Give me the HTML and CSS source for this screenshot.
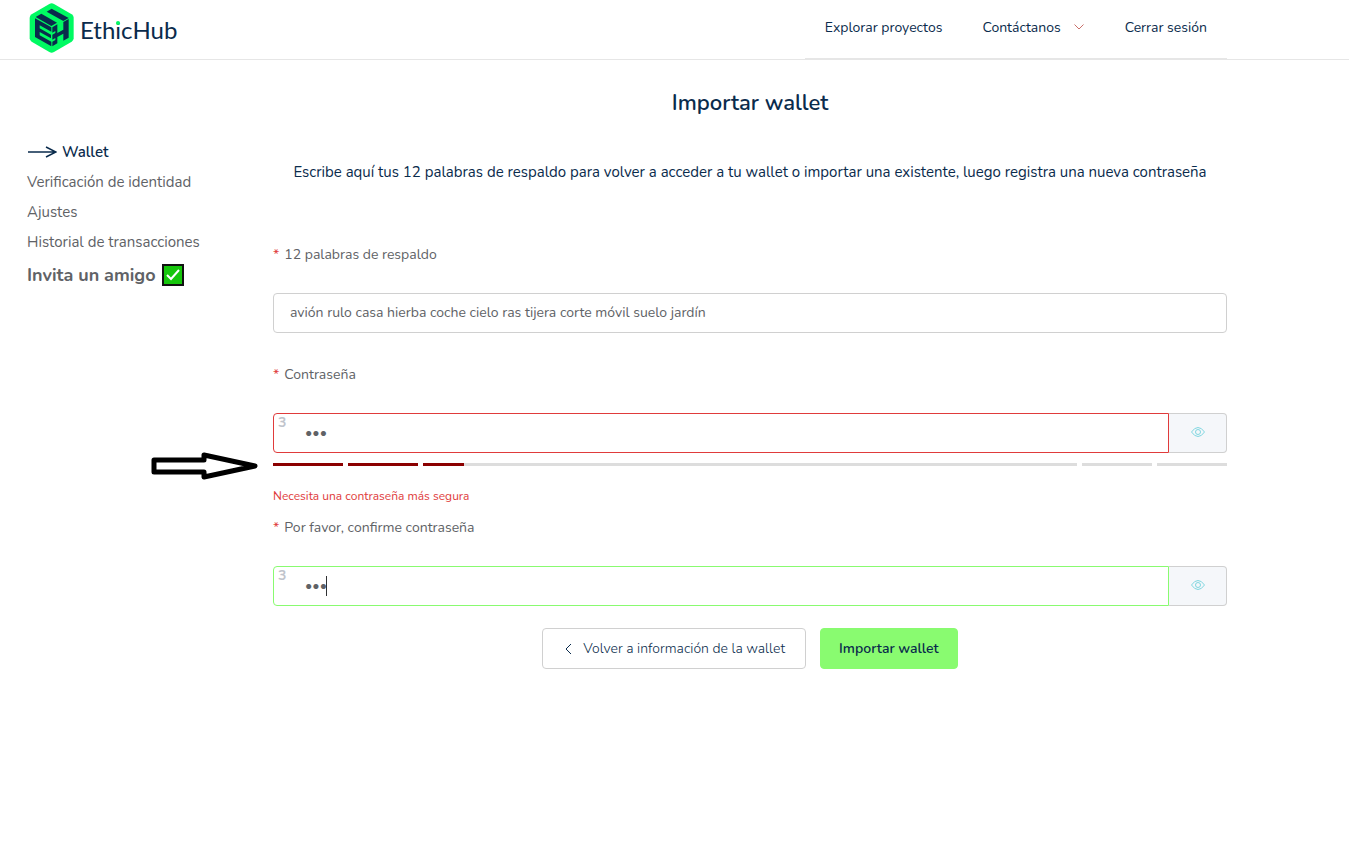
FILE: index.html
```html
<!DOCTYPE html>
<html lang="es">
<head>
  <meta charset="UTF-8" />
  <meta name="viewport" content="width=device-width, initial-scale=1.0"/>
  <title>EthicHub - Importar wallet</title>
  <link rel="stylesheet" href="styles.css">
</head>
<body>
  <header class="header">
    <a href="#" class="logo">
      <svg class="logo-mark" viewBox="0 0 135 150" aria-hidden="true">
        <path d="M61 3q7-4 14 0l53 31q6 4 6 10v62q0 6-6 10l-53 31q-7 4-14 0L8 116q-6-4-6-10V44q0-6 6-10z" fill="#00fa62"/>
        <g fill="#0a2b4c">
          <path d="M20 42l17-10 47 27-17 10z"/>
          <path d="M53 26l15-9 51 28-16 9z"/>
          <path d="M18 46l49 27v13L32 67v9l34 19v11L32 87v10l35 19v14L18 102z"/>
          <path d="M70 73l15-9v26l18-10V57l16-9v56l-16 9V92l-18 10v19l-15 9v-14l9-5v-6l-9 5V95l9-5v-6l-9 5z"/>
        </g>
      </svg>
      <span class="logo-text">Eth<span class="logo-i">i</span>cHub</span>
    </a>
    <nav class="nav">
      <a href="#">Explorar proyectos</a>
      <a href="#">Contáctanos
        <svg class="chevron" viewBox="0 0 12 12" aria-hidden="true"><path d="M1.500 3.500L6 8l4.500-4.500" fill="none" stroke="#c9706a"/></svg>
      </a>
      <a href="#">Cerrar sesión</a>
    </nav>
  </header>

  <div class="layout">
    <aside class="sidebar">
      <a href="#" class="active">
        <svg class="arrow" viewBox="0 0 30 12" aria-hidden="true"><path d="M1 6h28M19 1l10 5-10 5" fill="none" stroke="#0a2b4c" stroke-width="1.5"/></svg>
        Wallet
      </a>
      <a href="#">Verificación de identidad</a>
      <a href="#">Ajustes</a>
      <a href="#">Historial de transacciones</a>
      <a href="#" class="invite">Invita un amigo
        <svg class="check" viewBox="0 0 22 22" aria-hidden="true"><rect x="1" y="1" width="20" height="20" fill="#16c60c" stroke="#111" stroke-width="2"/><path d="M5 11l4 4 8-9" fill="none" stroke="#fff" stroke-width="2"/></svg>
      </a>
    </aside>

    <main class="content">
      <h1>Importar wallet</h1>
      <p class="intro">Escribe aquí tus 12 palabras de respaldo para volver a acceder a tu wallet o importar una existente, luego registra una nueva contraseña</p>

      <form>
        <div class="item">
          <label for="palabras">12 palabras de respaldo</label>
          <input type="text" id="palabras" value="avión rulo casa hierba coche cielo ras tijera corte móvil suelo jardín" />
        </div>

        <div class="item password">
          <label for="clave">Contraseña</label>
          <div class="group error">
            <span class="count">3</span>
            <input type="password" id="clave" value="abc" />
            <button type="button" class="toggle" aria-label="Mostrar contraseña">
              <svg viewBox="0 0 14 10" aria-hidden="true"><path d="M.5 5Q3.500 .5 7 .5T13.500 5Q10.500 9.500 7 9.500T.5 5z"/><circle cx="7" cy="5" r="2.500"/></svg>
            </button>
          </div>
          <div class="meter"><div class="meter-fill" style="width:20%"></div></div>
          <svg class="pointer" viewBox="0 0 107 28" aria-hidden="true"><path d="M3 8h50V3l51 11-51 11v-5H3z" fill="#fff" stroke="#000" stroke-width="5" stroke-linejoin="round"/></svg>
          <p class="message">Necesita una contraseña más segura</p>
        </div>

        <div class="item">
          <label for="confirmar">Por favor, confirme contraseña</label>
          <div class="group success">
            <span class="count">3</span>
            <input type="password" id="confirmar" value="abc" />
            <span class="caret"></span>
            <button type="button" class="toggle" aria-label="Mostrar contraseña">
              <svg viewBox="0 0 14 10" aria-hidden="true"><path d="M.5 5Q3.500 .5 7 .5T13.500 5Q10.500 9.500 7 9.500T.5 5z"/><circle cx="7" cy="5" r="2.500"/></svg>
            </button>
          </div>
        </div>

        <div class="buttons">
          <button type="button" class="btn">
            <svg class="back" viewBox="0 0 12 12" aria-hidden="true"><path d="M8 1L3 6l5 5" fill="none" stroke="#0a2b4c"/></svg>
            Volver a información de la wallet
          </button>
          <button type="submit" class="btn primary">Importar wallet</button>
        </div>
      </form>
    </main>
  </div>
</body>
</html>
```
FILE: styles.css
```css
* { box-sizing:border-box;}
body { margin:0; font-family: Nunito, Lato, sans-serif; font-size:14px; color:#606266; background:#fff;}
a { color:inherit; text-decoration:none;}
input, button { font-family:inherit; font-size:14px;}
svg { flex:none;}

.header { display:flex; justify-content:space-between; height:60px; padding:0 122px 0 27px; border-bottom:1px solid #e6e6e6; color:#0a2b4c;}
.logo { display:flex; align-items:center; gap:6px; padding:0 0 3px 2px;}
.logo-mark { width:45px; height:50px;}
.logo-text { font-family: Lato, sans-serif; font-size:24px; line-height:30px; padding-top:3px;}
.logo-i { position:relative;}
.logo-i::after { content:""; position:absolute; top:6px; left:1px; width:4px; height:4px; border-radius:50%; background:#00fa62;}
.nav { display:flex; border-bottom:1px solid #e6e6e6; padding-bottom:4px;}
.nav a { display:flex; align-items:center; gap:12px; padding:0 20px;}
.chevron { width:12px; height:12px;}

.layout { display:flex; padding:0 122px 0 27px;}
.sidebar { display:flex; flex-direction:column; width:246px; flex:none; padding-top:77px; font-size:15px; line-height:30px;}
.sidebar a { display:flex; align-items:center;}
.sidebar .active { gap:5px; color:#0a2b4c; font-weight:600;}
.arrow { width:30px; height:12px;}
.sidebar .invite { gap:6px; padding-top:3px; font-size:18px; font-weight:700;}
.check { width:22px; height:22px;}

.content { flex:1; min-width:0;}
h1 { margin:27px 0 0; font-size:22px; font-weight:600; line-height:32px; text-align:center; color:#0a2b4c;}
.intro { margin:41px 0; font-size:15px; line-height:24px; text-align:center; color:#0a2b4c;}
form { padding-top:9px;}
.item { position:relative; margin-bottom:21px;}
.item label { display:block; margin-bottom:17px; line-height:42px;}
.item label::before { content:"*"; margin-right:5px; color:#e03b3b;}
.item input { display:block; width:100%; height:40px; padding:0 16px 2px; border:1px solid #d0d0d0; border-radius:4px; color:#606266; background:#fff; outline:none;}

.group { position:relative; display:flex;}
.item .group input { flex:1; min-width:0; padding-left:31px; border-radius:4px 0 0 4px;}
.item .error input { border-color:#e03b3b;}
.item .success input { border-color:#89fb70;}
.count { position:absolute; top:0; left:5px; font-weight:bold; color:#c0c4cc;}
.caret { position:absolute; top:10px; left:53px; width:1px; height:20px; background:#303133;}
.toggle { display:flex; align-items:center; justify-content:center; width:58px; height:40px; padding:0 0 2px; border:1px solid #d0d0d0; border-left:0; border-radius:0 4px 4px 0; background:#f5f7fa;}
.toggle svg { width:14px; height:10px; fill:none; stroke:#7fd6e0;}

.password { margin-bottom:1px;}
.meter { position:relative; height:3px; margin-top:10px; background:#ddd;}
.meter-fill { height:3px; background:#8b0000;}
.meter::before, .meter::after { content:""; position:absolute; top:0; width:70px; height:3px; border:solid #fff; border-width:0 5px;}
.meter::before { left:70px;}
.meter::after { right:70px;}
.pointer { position:absolute; bottom:26px; right:calc(100% + 15px); width:107px; height:28px;}
.message { margin:20px 0 0; font-size:12px; line-height:20px; color:#e03b3b;}

.buttons { display:flex; justify-content:center; gap:14px; padding-top:1px;}
.btn { display:flex; align-items:center; height:41px; padding:0 20px; border:1px solid #d0d0d0; border-radius:4px; font-weight:300; color:#0a2b4c; background:#fff;}
.btn.primary { padding:0 18px; border-color:#89fb70; font-weight:600; background:#89fb70;}
.back { width:12px; height:12px; margin-right:8px;}
```
